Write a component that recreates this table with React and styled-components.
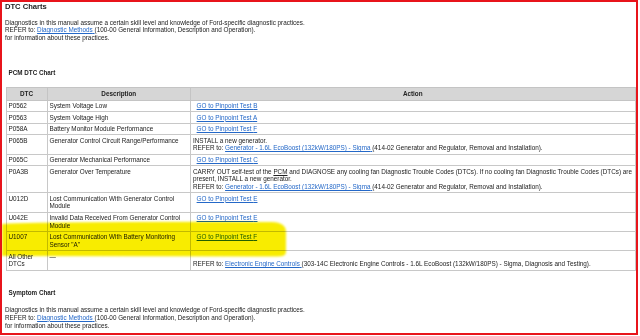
import React from 'react';
import styled, { createGlobalStyle } from 'styled-components';

const Global = createGlobalStyle`
  html, body { margin: 0; padding: 0; background: #fff; }
  body { font-family: "Liberation Sans", Arial, sans-serif; }
`;

const Frame = styled.div`
  box-sizing: border-box;
  position: relative;
  width: 638px;
  height: 335px;
  border: 2px solid #e8141b;
  padding: 0.6px 0 0 3px;
  color: #222;
  font-size: 6.35px;
  line-height: 7.8px;
`;

const Title = styled.div`
  font-weight: bold;
  font-size: 7.6px;
  line-height: 7.8px;
`;

const SubTitle = styled.div`
  font-weight: bold;
  font-size: 6.3px;
  line-height: 7.8px;
  margin: ${p => p.$top}px 0 0 3.5px;
`;

const Para = styled.div`
  margin-top: ${p => p.$top}px;
`;

const Line = styled.div`
  white-space: nowrap;
`;

const Link = styled.a`
  color: #2468c8;
  text-decoration: underline;
  cursor: pointer;
  margin-left: ${p => (p.$indent ? '3.6px' : '0')};
`;

const Abbr = styled.span`
  text-decoration: underline;
`;

const Table = styled.table`
  margin: 11px 0 0 0.5px;
  width: 630px;
  border-collapse: collapse;
  table-layout: fixed;
  font-size: 6.35px;
  line-height: 7.8px;
  color: #222;
`;

const Th = styled.th`
  background: #d6d6d6;
  border: 1px solid #c4c4c4;
  font-weight: bold;
  text-align: center;
  padding: 1.8px 2px 1.7px;
`;

const Td = styled.td`
  border: 1px solid #c8c8c8;
  vertical-align: top;
  text-align: left;
  padding: 1.25px 2px 1.5px;
`;

const Highlight = styled.svg`
  position: absolute;
  left: -2px;
  top: 217px;
  width: 288px;
  height: 40px;
  mix-blend-mode: multiply;
  pointer-events: none;
`;

const Go = ({ t }) => <Link $indent>GO to Pinpoint Test {t}</Link>;

const Refer = ({ to, rest }) => (
  <Line>
    REFER to: <Link>{to} </Link>
    {rest}
  </Line>
);

const rows = [
  { code: 'P0562', desc: 'System Voltage Low', action: <Go t="B" /> },
  { code: 'P0563', desc: 'System Voltage High', action: <Go t="A" /> },
  { code: 'P058A', desc: 'Battery Monitor Module Performance', action: <Go t="F" /> },
  {
    code: 'P065B',
    desc: 'Generator Control Circuit Range/Performance',
    action: (
      <>
        <Line>INSTALL a new generator.</Line>
        <Refer
          to="Generator - 1.6L EcoBoost (132kW/180PS) - Sigma"
          rest="(414-02 Generator and Regulator, Removal and Installation)."
        />
      </>
    ),
  },
  { code: 'P065C', desc: 'Generator Mechanical Performance', action: <Go t="C" /> },
  {
    code: 'P0A3B',
    desc: 'Generator Over Temperature',
    action: (
      <>
        <Line>
          CARRY OUT self-test of the <Abbr>PCM</Abbr> and DIAGNOSE any cooling fan Diagnostic Trouble Codes (DTCs). If no cooling fan Diagnostic Trouble Codes (DTCs) are
        </Line>
        <Line>present, INSTALL a new generator.</Line>
        <Refer
          to="Generator - 1.6L EcoBoost (132kW/180PS) - Sigma"
          rest="(414-02 Generator and Regulator, Removal and Installation)."
        />
      </>
    ),
  },
  { code: 'U012D', desc: 'Lost Communication With Generator Control Module', action: <Go t="E" /> },
  { code: 'U042E', desc: 'Invalid Data Received From Generator Control Module', action: <Go t="E" /> },
  { code: 'U1007', desc: 'Lost Communication With Battery Monitoring Sensor "A"', action: <Go t="F" /> },
  {
    code: 'All Other DTCs',
    desc: '—',
    action: (
      <>
        <br />
        <Refer
          to="Electronic Engine Controls"
          rest="(303-14C Electronic Engine Controls - 1.6L EcoBoost (132kW/180PS) - Sigma, Diagnosis and Testing)."
        />
      </>
    ),
  },
];

const Intro = ({ top }) => (
  <Para $top={top}>
    <Line>Diagnostics in this manual assume a certain skill level and knowledge of Ford-specific diagnostic practices.</Line>
    <Refer to="Diagnostic Methods" rest="(100-00 General Information, Description and Operation)." />
    <Line>for information about these practices.</Line>
  </Para>
);

export default function App() {
  return (
    <>
      <Global />
      <Frame>
        <Title>DTC Charts</Title>
        <Intro top={8.2} />
        <SubTitle $top={26.7}>PCM DTC Chart</SubTitle>
        <Table>
          <colgroup>
            <col style={{ width: 41 }} />
            <col style={{ width: 143.5 }} />
            <col />
          </colgroup>
          <thead>
            <tr>
              <Th>DTC</Th>
              <Th>Description</Th>
              <Th>Action</Th>
            </tr>
          </thead>
          <tbody>
            {rows.map(r => (
              <tr key={r.code}>
                <Td>{r.code}</Td>
                <Td>{r.desc}</Td>
                <Td>{r.action}</Td>
              </tr>
            ))}
          </tbody>
        </Table>
        <SubTitle $top={18.5}>Symptom Chart</SubTitle>
        <Intro top={8.9} />
        <Highlight viewBox="0 0 288 40">
          <defs>
            <filter id="soft" x="-5%" y="-20%" width="110%" height="140%">
              <feGaussianBlur stdDeviation="0.8" />
            </filter>
          </defs>
          <path
            d="M2,5 Q30,3.5 90,3.3 Q200,2.6 272,3 Q286,3.5 286,13 L286,33 Q286,37.5 278,37.5 L2,37 Z"
            fill="#f8ec00"
            filter="url(#soft)"
          />
        </Highlight>
      </Frame>
    </>
  );
}
